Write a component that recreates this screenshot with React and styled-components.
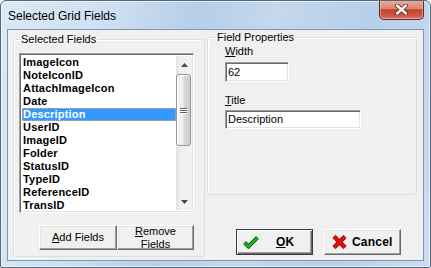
import React from 'react'
import styled, { createGlobalStyle, css } from 'styled-components'

const GlobalStyle = createGlobalStyle`
  html, body {
    margin: 0;
    padding: 0;
    background: #ffffff;
  }
  body {
    font-family: "Liberation Sans", Arial, sans-serif;
    font-size: 11px;
    color: #000;
  }
`

const sunken = css`
  box-sizing: border-box;
  border: 1px solid;
  border-color: #a0a0a0 #ffffff #ffffff #a0a0a0;
  box-shadow: inset 1px 1px 0 #696969, inset -1px -1px 0 #e3e3e3;
  background: #ffffff;
`

const Window = styled.div`
  width: 431px;
  height: 268px;
  box-sizing: border-box;
  border: 1px solid #56677a;
  border-radius: 6px 6px 2px 2px;
  background: linear-gradient(100deg, #dce8f5 0%, #cfe0f2 22%, #b5cee9 42%, #c4d8ee 58%, #b7cfea 78%, #cbdcf0 100%);
  box-shadow: inset 0 0 0 1px rgba(255, 255, 255, 0.6);
  display: flex;
  flex-direction: column;
  padding: 0 6px 6px 6px;
  overflow: hidden;
`

const TitleBar = styled.div`
  height: 28px;
  display: flex;
  align-items: flex-start;
  justify-content: space-between;
`

const TitleText = styled.div`
  font-family: "Liberation Sans", Arial, sans-serif;
  font-size: 12px;
  line-height: 15px;
  padding: 8px 0 0 1px;
  color: #000;
`

const CloseButton = styled.div`
  width: 45px;
  height: 20px;
  margin-top: -1px;
  box-sizing: border-box;
  border: 1px solid #5b2a24;
  border-top: none;
  border-radius: 0 0 5px 5px;
  background: linear-gradient(180deg, #eab0a3 0%, #dc826f 45%, #c4412f 52%, #cf5a45 85%, #dd8068 100%);
  box-shadow: inset 0 0 0 1px rgba(255, 220, 210, 0.45);
  display: flex;
  align-items: center;
  justify-content: center;
`

const Client = styled.div`
  flex: 1;
  box-sizing: border-box;
  border: 1px solid #7f96b0;
  background: #f0f0f0;
  display: flex;
  padding: 0 6px 0 5px;
`

const LeftColumn = styled.div`
  width: 192px;
  padding-top: 3px;
`

const RightColumn = styled.div`
  flex: 1;
  margin-left: 2px;
  padding-top: 1px;
  display: flex;
  flex-direction: column;
`

const GroupBox = styled.fieldset`
  margin: 0;
  box-sizing: border-box;
  height: ${p => p.$height}px;
  border: 1px solid #d5dfe5;
  border-radius: 3px;
  box-shadow: inset 1px 1px 0 #ffffff;
  padding: ${p => p.$padding};
  min-width: 0;
`

const Legend = styled.legend`
  padding: 0 ${p => p.$pad}px;
  font-size: 11px;
  line-height: 13px;
  color: #000;
`

const ListBox = styled.div`
  ${sunken}
  width: 175px;
  height: 160px;
  padding: 2px 1px 2px 2px;
  display: flex;
`

const Items = styled.div`
  flex: 1;
  overflow: hidden;
`

const Item = styled.div`
  height: 13px;
  line-height: 13px;
  padding-left: 1px;
  font-weight: bold;
  font-size: 11px;
  letter-spacing: 0.2px;
  white-space: nowrap;
  ${p => p.$selected && css`
    background: #3399ff;
    color: #ffffff;
    outline: 1px dotted #f5a860;
    outline-offset: -1px;
  `}
`

const ScrollBar = styled.div`
  width: 16px;
  display: flex;
  flex-direction: column;
  background: linear-gradient(90deg, #e2e2e2 0%, #efefef 30%, #f2f2f2 100%);
`

const ArrowButton = styled.div`
  height: 17px;
  display: flex;
  align-items: center;
  justify-content: center;
`

const Track = styled.div`
  flex: 1;
  padding: 1px 0 0 0;
`

const Thumb = styled.div`
  box-sizing: border-box;
  height: 72px;
  margin: 0 1px 0 0;
  border: 1px solid #979797;
  border-radius: 3px;
  background: linear-gradient(90deg, #f7f7f7 0%, #ececec 45%, #dadada 55%, #cdcdcd 100%);
  box-shadow: inset 1px 1px 0 #ffffff;
  display: flex;
  flex-direction: column;
  align-items: center;
  justify-content: center;
  gap: 1px;
`

const Grip = styled.div`
  width: 7px;
  height: 1px;
  background: #5f5f5f;
  box-shadow: 0 1px 0 #ffffff;
`

const ButtonRow = styled.div`
  display: flex;
  justify-content: flex-end;
  margin-top: ${p => p.$top}px;
  gap: ${p => p.$gap}px;
  padding-right: ${p => p.$right}px;
`

const PushButton = styled.div`
  box-sizing: border-box;
  width: ${p => p.$width}px;
  height: ${p => p.$height}px;
  background: #f0f0f0;
  border: 1px solid;
  border-color: #ffffff #696969 #696969 #ffffff;
  box-shadow: inset -1px -1px 0 #a0a0a0, inset 1px 1px 0 #e3e3e3;
  display: flex;
  flex-direction: column;
  align-items: center;
  justify-content: center;
  overflow: hidden;
  font-size: 11px;
  line-height: 13px;
  text-align: center;
  color: #000;
`

const DialogButton = styled.div`
  box-sizing: border-box;
  width: 77px;
  height: 26px;
  background: #f0f0f0;
  border: 1px solid ${p => (p.$default ? '#3c3c3c' : '#ffffff')};
  ${p => p.$default
    ? css`box-shadow: inset 1px 1px 0 #ffffff, inset -1px -1px 0 #696969, inset -2px -2px 0 #a0a0a0;`
    : css`
      border-color: #ffffff #696969 #696969 #ffffff;
      box-shadow: inset -1px -1px 0 #a0a0a0, inset 1px 1px 0 #e3e3e3;
    `}
  display: flex;
  align-items: center;
  padding-left: ${p => p.$padLeft}px;
  font-weight: bold;
  font-size: 12px;
`

const ButtonLabel = styled.span`
  margin-left: ${p => p.$gap}px;
  letter-spacing: 0.2px;
`

const Form = styled.div`
  padding-left: 9px;
  display: flex;
  flex-direction: column;
  align-items: flex-start;
`

const FieldLabel = styled.div`
  font-size: 11px;
  line-height: 13px;
  margin-top: ${p => p.$top}px;
`

const TextBox = styled.div`
  ${sunken}
  width: ${p => p.$width}px;
  height: ${p => p.$height}px;
  margin-top: ${p => p.$top}px;
  padding-left: 2px;
  font-size: 11px;
  line-height: ${p => p.$height - 2}px;
`

const fields = [
  'ImageIcon',
  'NoteIconID',
  'AttachImageIcon',
  'Date',
  'Description',
  'UserID',
  'ImageID',
  'Folder',
  'StatusID',
  'TypeID',
  'ReferenceID',
  'TransID'
]

function Arrow({ up }) {
  return (
    <svg width="7" height="4" viewBox="0 0 7 4">
      <path d={up ? 'M0 4 L3.5 0 L7 4 Z' : 'M0 0 L3.5 4 L7 0 Z'} fill="#4a4a4a" />
    </svg>
  )
}

function CheckIcon() {
  return (
    <svg width="16" height="13" viewBox="0 0 16 13">
      <polyline points="1.5,6.5 5.5,10.5 14.5,1.5" fill="none" stroke="#0e6a0e" strokeWidth="4" strokeLinejoin="miter" />
      <polyline points="1.5,6.5 5.5,10.5 14.5,1.5" fill="none" stroke="#22b122" strokeWidth="2.2" strokeLinejoin="miter" />
    </svg>
  )
}

function CrossIcon() {
  return (
    <svg width="15" height="14" viewBox="0 0 15 14">
      <path d="M2 1.5 L13 12.5 M13 1.5 L2 12.5" stroke="#8a0000" strokeWidth="4.4" />
      <path d="M2 1.5 L13 12.5 M13 1.5 L2 12.5" stroke="#e81010" strokeWidth="3" />
    </svg>
  )
}

function CloseGlyph() {
  return (
    <svg width="13" height="11" viewBox="0 0 13 11">
      <path d="M2 1.5 L11 9.5 M11 1.5 L2 9.5" stroke="#5a2018" strokeWidth="4" strokeLinecap="round" />
      <path d="M2 1.5 L11 9.5 M11 1.5 L2 9.5" stroke="#ffffff" strokeWidth="2.4" strokeLinecap="round" />
    </svg>
  )
}

export default function App() {
  return (
    <>
      <GlobalStyle />
      <Window>
        <TitleBar>
          <TitleText>Selected Grid Fields</TitleText>
          <CloseButton><CloseGlyph /></CloseButton>
        </TitleBar>
        <Client>
          <LeftColumn>
            <GroupBox $height={224} $padding="7px 10px 0 5px">
              <Legend $pad={2}>Selected Fields</Legend>
              <ListBox>
                <Items>
                  {fields.map(f => (
                    <Item key={f} $selected={f === 'Description'}>{f}</Item>
                  ))}
                </Items>
                <ScrollBar>
                  <ArrowButton><Arrow up /></ArrowButton>
                  <Track>
                    <Thumb>
                      <Grip />
                      <Grip />
                      <Grip />
                    </Thumb>
                  </Track>
                  <ArrowButton><Arrow /></ArrowButton>
                </ScrollBar>
              </ListBox>
              <ButtonRow $top={12} $gap={0} $right={0}>
                <PushButton $width={78} $height={25}>
                  <span><u>A</u>dd Fields</span>
                </PushButton>
                <PushButton $width={77} $height={25}>
                  <span><u>R</u>emove</span>
                  <span>Fields</span>
                </PushButton>
              </ButtonRow>
            </GroupBox>
          </LeftColumn>
          <RightColumn>
            <GroupBox $height={164} $padding="0 8px 0 8px">
              <Legend $pad={1}>Field Properties</Legend>
              <Form>
                <FieldLabel $top={1}><u>W</u>idth</FieldLabel>
                <TextBox $width={64} $height={20} $top={4}>62</TextBox>
                <FieldLabel $top={12}><u>T</u>itle</FieldLabel>
                <TextBox $width={136} $height={19} $top={3}>Description</TextBox>
              </Form>
            </GroupBox>
            <ButtonRow $top={34} $gap={11} $right={16}>
              <DialogButton $default $padLeft={6}>
                <CheckIcon />
                <ButtonLabel $gap={17}><u>O</u>K</ButtonLabel>
              </DialogButton>
              <DialogButton $padLeft={7}>
                <CrossIcon />
                <ButtonLabel $gap={5}>Cancel</ButtonLabel>
              </DialogButton>
            </ButtonRow>
          </RightColumn>
        </Client>
      </Window>
    </>
  )
}
